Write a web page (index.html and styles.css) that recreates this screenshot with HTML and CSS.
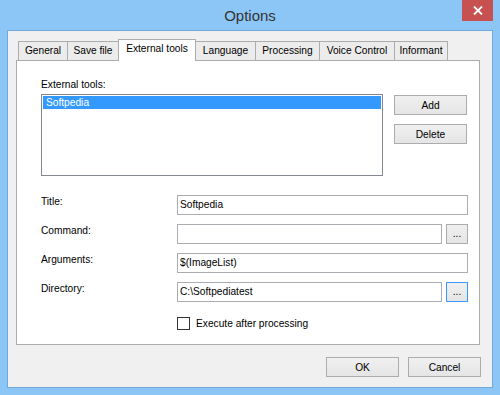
FILE: index.html
```html
<!DOCTYPE html>
<html lang="en">
<head>
  <meta charset="UTF-8" />
  <title>Options</title>
  <link rel="stylesheet" href="styles.css">
</head>
<body>

  <div class="window">
    <div class="titlebar">
      <span class="title">Options</span>
      <div class="close">
        <svg width="10" height="9" viewBox="0 0 10 9">
          <path d="M1 0.5 L9 8.5 M9 0.5 L1 8.5" stroke="#fff" stroke-width="1.8"/>
        </svg>
      </div>
    </div>

    <div class="client">
      <div class="tabs">
        <div class="tab general">General</div>
        <div class="tab save">Save file</div>
        <div class="tab external active">External tools</div>
        <div class="tab language">Language</div>
        <div class="tab processing">Processing</div>
        <div class="tab voice">Voice Control</div>
        <div class="tab informant">Informant</div>
      </div>

      <div class="panel">
        <div class="caption">External tools:</div>
        <div class="list-row">
          <div class="listbox">
            <div class="item selected">Softpedia</div>
          </div>
          <div class="side-buttons">
            <button class="btn side">Add</button>
            <button class="btn side">Delete</button>
          </div>
        </div>

        <!-- tool details -->
        <div class="form">
          <label>Title:</label>
          <div class="field"><div class="input">Softpedia</div></div>

          <label>Command:</label>
          <div class="field"><div class="input"></div><button class="btn browse">...</button></div>

          <label>Arguments:</label>
          <div class="field"><div class="input">$(ImageList)</div></div>

          <label>Directory:</label>
          <div class="field"><div class="input">C:\Softpediatest</div><button class="btn browse focused">...</button></div>

          <span></span>
          <div class="check-row"><span class="checkbox"></span>Execute after processing</div>
        </div>
      </div>

      <div class="footer">
        <button class="btn dialog">OK</button>
        <button class="btn dialog">Cancel</button>
      </div>
    </div>
  </div>

</body>
</html>
```

FILE: styles.css
```css
* {
  box-sizing: border-box;
}

body {
  margin: 0;
  font-family: 'Liberation Sans', Arial, sans-serif;
  font-size: 10.2px;
  color: #000;
}

.window {
  width: 500px;
  height: 395px;
  background-color: #8cc6f7;
  display: flex;
  flex-direction: column;
}

.titlebar {
  height: 30px;
  flex-shrink: 0;
  position: relative;
  display: flex;
  align-items: center;
  justify-content: center;
}

.title {
  font-size: 15px;
  color: #333;
  margin-top: 1px;
}

.close {
  position: absolute;
  top: 0;
  right: 7px;
  width: 31px;
  height: 21px;
  background-color: #c75050;
  display: flex;
  align-items: center;
  justify-content: center;
}

.client {
  flex: 1;
  min-height: 0;
  margin: 0 7px 7px;
  border: 1px solid #72a9dc;
  background-color: #f0f0f0;
  padding: 8px 12px 0 8px;
  display: flex;
  flex-direction: column;
}

.tabs {
  display: flex;
  align-items: flex-end;
  height: 21px;
  flex-shrink: 0;
  padding-left: 2px;
}

.tab {
  height: 19px;
  line-height: 18px;
  text-align: center;
  white-space: nowrap;
  border: 1px solid #acacac;
  border-bottom: none;
  border-right: none;
  background-color: #ececec;
}

.tab.general { width: 49px; }
.tab.save { width: 51px; }
.tab.external { width: 78px; }
.tab.language { width: 59px; }
.tab.processing { width: 64px; }
.tab.voice { width: 75px; }
.tab.informant { width: 54px; border-right: 1px solid #acacac; }

.tab.active {
  height: 22px;
  line-height: 17px;
  margin-bottom: -1px;
  background-color: #fff;
  border-right: 1px solid #acacac;
  position: relative;
  z-index: 1;
}

.tab.active + .tab {
  border-left: none;
}

.panel {
  height: 285px;
  flex-shrink: 0;
  background-color: #fff;
  border: 1px solid #acacac;
  padding: 17px 11px 0 24px;
}

.caption {
  line-height: 13px;
  margin-bottom: 3px;
}

.list-row {
  display: flex;
  align-items: flex-start;
}

.listbox {
  width: 342px;
  height: 82px;
  border: 1px solid #828790;
  padding: 1px;
}

.item {
  height: 13px;
  line-height: 13px;
  padding-left: 3px;
}

.item.selected {
  background-color: #3399ff;
  color: #fff;
}

.side-buttons {
  display: flex;
  flex-direction: column;
  gap: 9px;
  margin-left: 11px;
  margin-top: 1px;
}

.btn {
  font-family: inherit;
  font-size: inherit;
  color: #000;
  background: linear-gradient(#f0f0f0, #e5e5e5);
  border: 1px solid #acacac;
  height: 20px;
  padding: 0;
  margin: 0;
}

.btn.side {
  width: 73px;
}

.form {
  display: grid;
  grid-template-columns: 136px 1fr;
  row-gap: 9px;
  margin-top: 19px;
}

.form label {
  line-height: 13px;
}

.field {
  display: flex;
  gap: 4px;
}

.input {
  flex: 1;
  height: 20px;
  line-height: 18px;
  border: 1px solid #abadb3;
  padding-left: 2px;
}

.btn.browse {
  width: 22px;
  line-height: 14px;
}

.btn.focused {
  border-color: #3399ff;
}

.check-row {
  display: flex;
  align-items: center;
  gap: 6px;
  margin-top: 6px;
  line-height: 13px;
}

.checkbox {
  width: 13px;
  height: 13px;
  border: 1px solid #333;
  background-color: #fff;
}

.footer {
  display: flex;
  justify-content: flex-end;
  gap: 9px;
  margin-top: 12px;
  margin-right: -1px;
}

.btn.dialog {
  width: 73px;
}
```
